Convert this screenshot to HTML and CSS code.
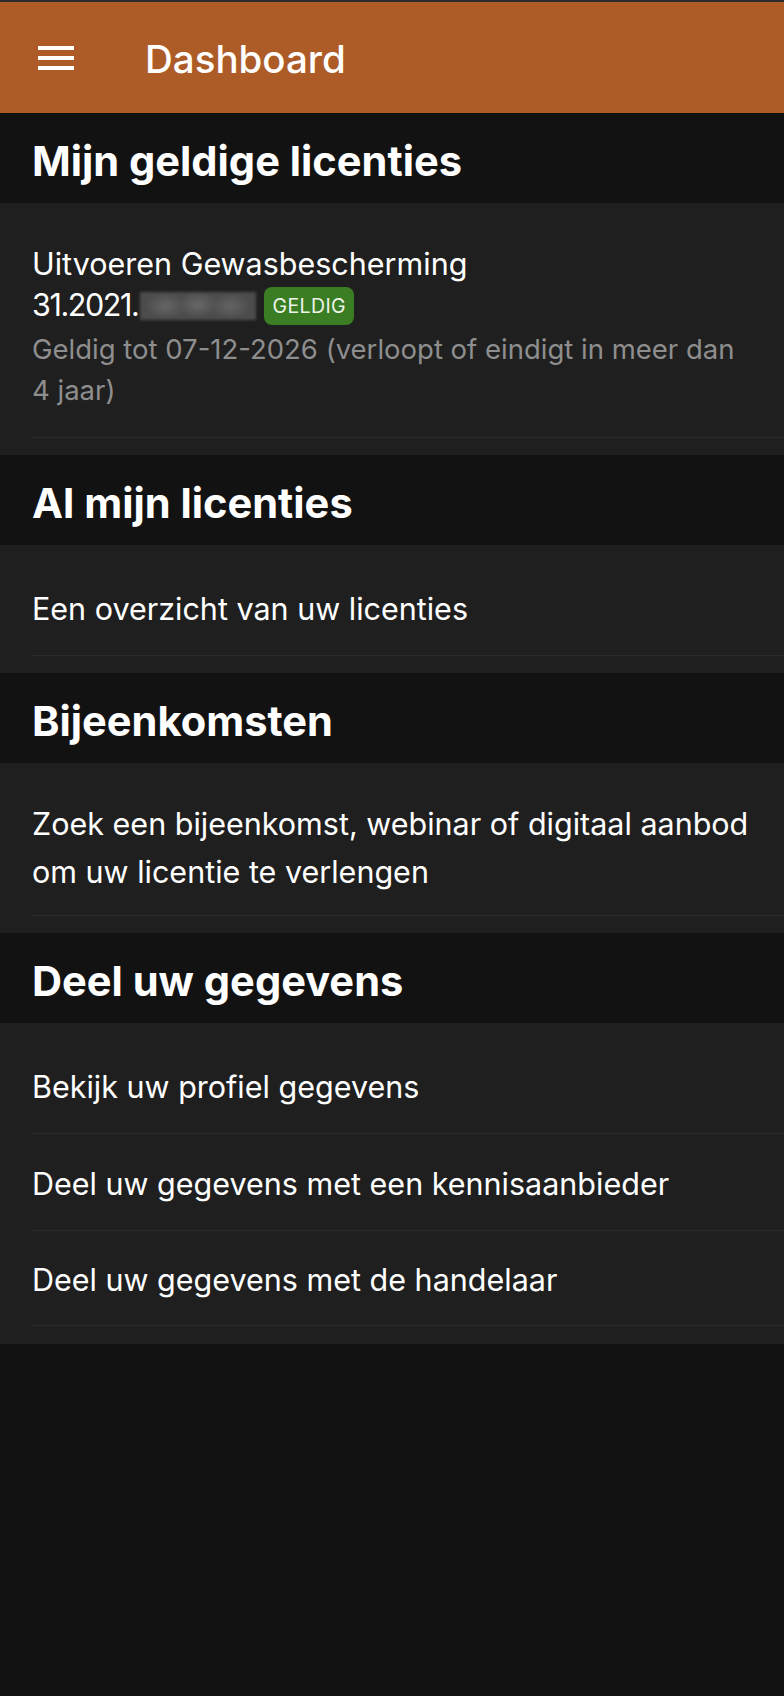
FILE: index.html
```html
<!DOCTYPE html>
<html lang="nl">
<head>
<meta charset="utf-8">
<title>Dashboard</title>
<link rel="stylesheet" href="styles.css">
</head>
<body>
<header class="toolbar">
  <button class="menu-btn" aria-label="Menu">
    <svg width="36" height="24" viewBox="0 0 36 24"><rect x="0" y="0" width="36" height="4" fill="#fff"/><rect x="0" y="10" width="36" height="4" fill="#fff"/><rect x="0" y="20" width="36" height="4" fill="#fff"/></svg>
  </button>
  <h1 class="toolbar-title">Dashboard</h1>
</header>
<main>
  <section class="group">
    <h2 class="group-title">Mijn geldige licenties</h2>
    <div class="list">
      <div class="item">
        <div class="item-inner item-inner--license">
          <div class="license">
            <div class="license-name">Uitvoeren Gewasbescherming</div>
            <div class="license-number">
              <span class="num">31.2021.</span><span class="redacted"></span><span class="badge">GELDIG</span>
            </div>
            <p class="license-note">Geldig tot 07-12-2026 (verloopt of eindigt in meer dan 4 jaar)</p>
          </div>
        </div>
      </div>
    </div>
  </section>
  <section class="group">
    <h2 class="group-title">Al mijn licenties</h2>
    <div class="list">
      <div class="item"><div class="item-inner"><span class="label">Een overzicht van uw licenties</span></div></div>
    </div>
  </section>
  <section class="group">
    <h2 class="group-title">Bijeenkomsten</h2>
    <div class="list">
      <div class="item"><div class="item-inner"><span class="label">Zoek een bijeenkomst, webinar of digitaal aanbod om uw licentie te verlengen</span></div></div>
    </div>
  </section>
  <section class="group">
    <h2 class="group-title">Deel uw gegevens</h2>
    <div class="list list--multi">
      <div class="item"><div class="item-inner"><span class="label">Bekijk uw profiel gegevens</span></div></div>
      <div class="item"><div class="item-inner"><span class="label">Deel uw gegevens met een kennisaanbieder</span></div></div>
      <div class="item"><div class="item-inner"><span class="label">Deel uw gegevens met de handelaar</span></div></div>
    </div>
  </section>
</main>
</body>
</html>
```
FILE: styles.css
```css
* { box-sizing: border-box; }
html, body { margin: 0; padding: 0; }
body {
  background: #121212;
  color: #ffffff;
  font-family: Inter, "Noto Sans", "Liberation Sans", sans-serif;
  min-height: 1696px;
}
.toolbar {
  height: 113px;
  border-top: 2px solid #2c2c2c;
  background: #ad5c28;
  display: flex;
  align-items: center;
  padding-left: 38px;
}
.menu-btn {
  background: none;
  border: 0;
  padding: 0;
  width: 36px;
  height: 24px;
  display: block;
}
.menu-btn svg { display: block; }
.toolbar-title {
  margin: 2px 0 0 71px;
  font-size: 38.5px;
  font-weight: 500;
  line-height: 48px;
  color: #fff;
}
.group-title {
  margin: 0;
  height: 90px;
  padding: 23px 32px 0;
  font-size: 41.6px;
  line-height: 50px;
  font-weight: 700;
  background: #121212;
}
.list {
  background: #1f1f1f;
  padding: 14px 0 17px;
}
.item { padding-left: 32px; }
.item-inner {
  min-height: 97px;
  padding: 23px 20px 19px 0;
  border-bottom: 1px solid #2a2a2a;
  display: flex;
  align-items: center;
}
.list--multi .item:last-child .item-inner {
  min-height: 95px;
  padding-top: 22px;
  padding-bottom: 18px;
}
.list--multi { padding-bottom: 18px; }
.label {
  font-size: 30.5px;
  line-height: 48px;
}
.item-inner--license {
  padding-top: 27px;
  padding-bottom: 26px;
  padding-right: 28px;
}
.license-name {
  font-size: 30.5px;
  line-height: 38px;
  padding-top: 1px;
}
.license-number {
  display: flex;
  align-items: center;
  height: 38px;
  margin-top: 4px;
  font-size: 30.5px;
  line-height: 38px;
}
.num {
  position: relative;
  top: -1px;
  letter-spacing: -1.4px;
}
.redacted {
  width: 116px;
  height: 28px;
  margin-left: 2px;
  background: radial-gradient(ellipse 20px 13px at 22% 50%, #666, transparent),
              radial-gradient(ellipse 20px 13px at 50% 45%, #686868, transparent),
              radial-gradient(ellipse 20px 13px at 78% 50%, #646464, transparent),
              #4c4c4c;
  filter: blur(1.5px);
}
.badge {
  margin-left: 8px;
  height: 38px;
  padding: 0 8px;
  border-radius: 8px;
  background: #3a7d23;
  color: #eef4ea;
  font-size: 19.5px;
  line-height: 38px;
  font-weight: 400;
  letter-spacing: 0.4px;
}
.license-note {
  margin: 4px 0 0;
  font-size: 27.5px;
  line-height: 41px;
  color: #8e8e8e;
}
```
